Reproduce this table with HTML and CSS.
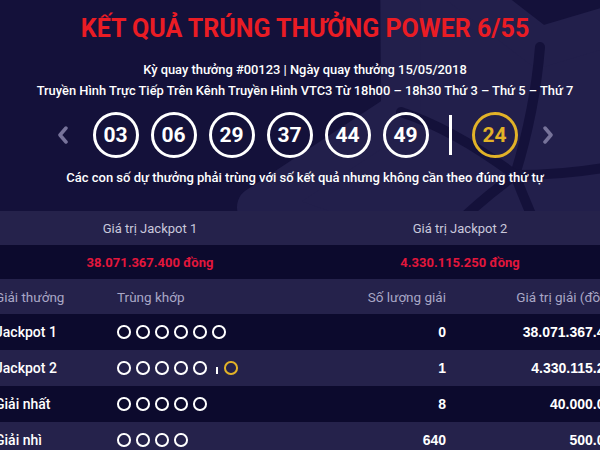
FILE: index.html
```html
<!DOCTYPE html>
<html lang="vi">
<head>
<meta charset="utf-8">
<title>Kết quả Power 6/55</title>
<link rel="stylesheet" href="styles.css">
</head>
<body>
<div class="page">
  <header class="hero">
    <svg class="hero-bg" viewBox="0 0 620 212" width="620" height="212" aria-hidden="true">
      <path class="star" d="M405 -61 L545 47 L710 -2 L649 159 L747 301 L575 293 L470 430 L425 264 L262 207 L406 112 Z"/>
      <path class="gap" d="M520 175 Q540 110 545 47"/>
      <path class="gap" d="M520 175 Q590 175 649 159"/>
      <path class="gap" d="M520 175 Q545 240 575 293"/>
      <path class="gap" d="M520 175 Q465 215 425 264"/>
      <path class="gap" d="M520 175 Q460 130 406 112"/>
    </svg>
    <div class="hero-content">
      <h1 class="title">KẾT QUẢ TRÚNG THƯỞNG POWER 6/55</h1>
      <p class="meta meta-first">Kỳ quay thưởng #00123 | Ngày quay thưởng 15/05/2018</p>
      <p class="meta">Truyền Hình Trực Tiếp Trên Kênh Truyền Hình VTC3 Từ 18h00 – 18h30 Thứ 3 – Thứ 5 – Thứ 7</p>
      <div class="balls">
        <svg class="chev" viewBox="0 0 12 18" width="12" height="18"><polyline points="9,2 3,9 9,16"/></svg>
        <span class="ball">03</span>
        <span class="ball">06</span>
        <span class="ball">29</span>
        <span class="ball">37</span>
        <span class="ball">44</span>
        <span class="ball">49</span>
        <span class="sep"></span>
        <span class="ball ball-gold">24</span>
        <svg class="chev" viewBox="0 0 12 18" width="12" height="18"><polyline points="3,2 9,9 3,16"/></svg>
      </div>
      <p class="note">Các con số dự thưởng phải trùng với số kết quả nhưng không cần theo đúng thứ tự</p>
    </div>
  </header>

  <section class="jackpots">
    <div class="jp-label">Giá trị Jackpot 1</div>
    <div class="jp-label">Giá trị Jackpot 2</div>
    <div class="jp-value">38.071.367.400 đồng</div>
    <div class="jp-value">4.330.115.250 đồng</div>
  </section>

  <section class="prizes">
    <div class="row row-head">
      <div class="c-name">Giải thưởng</div>
      <div class="c-match">Trùng khớp</div>
      <div class="c-count">Số lượng giải</div>
      <div class="c-value">Giá trị giải (đồng)</div>
    </div>
    <div class="row row-dark">
      <div class="c-name">Jackpot 1</div>
      <div class="c-match"><i class="dot"></i><i class="dot"></i><i class="dot"></i><i class="dot"></i><i class="dot"></i><i class="dot"></i></div>
      <div class="c-count num">0</div>
      <div class="c-value num">38.071.367.400</div>
    </div>
    <div class="row row-light">
      <div class="c-name">Jackpot 2</div>
      <div class="c-match"><i class="dot"></i><i class="dot"></i><i class="dot"></i><i class="dot"></i><i class="dot"></i><i class="bar"></i><i class="dot dot-gold"></i></div>
      <div class="c-count num">1</div>
      <div class="c-value num">4.330.115.250</div>
    </div>
    <div class="row row-dark">
      <div class="c-name">Giải nhất</div>
      <div class="c-match"><i class="dot"></i><i class="dot"></i><i class="dot"></i><i class="dot"></i><i class="dot"></i></div>
      <div class="c-count num">8</div>
      <div class="c-value num">40.000.000</div>
    </div>
    <div class="row row-light">
      <div class="c-name">Giải nhì</div>
      <div class="c-match"><i class="dot"></i><i class="dot"></i><i class="dot"></i><i class="dot"></i></div>
      <div class="c-count num">640</div>
      <div class="c-value num">500.000</div>
    </div>
  </section>
</div>
</body>
</html>
```

FILE: styles.css
```css
* { box-sizing: border-box; }

body {
  margin: 0;
  background: #14113a;
  font-family: Roboto, "Liberation Sans", sans-serif;
  overflow: hidden;
}

.page {
  width: 620px;
  margin-left: -5px;
}

/* ---------- hero ---------- */
.hero {
  position: relative;
  height: 211px;
  overflow: hidden;
  text-align: center;
  color: #fff;
}

.hero-bg {
  position: absolute;
  left: 0;
  top: 0;
}

.star {
  fill: #221f4b;
  stroke: #221f4b;
  stroke-width: 40;
  stroke-linejoin: round;
}

.gap {
  fill: none;
  stroke: #14113a;
  stroke-width: 10;
  stroke-linecap: round;
}

.hero-content {
  position: relative;
  padding-top: 15px;
}

.title {
  margin: 0;
  font-size: 25px;
  line-height: 28px;
  font-weight: 700;
  color: #ea1c24;
}

.meta {
  margin: 0;
  font-size: 12.9px;
  line-height: 21px;
  font-weight: 500;
}

.meta-first {
  margin-top: 16px;
}

.balls {
  display: flex;
  justify-content: center;
  align-items: center;
  gap: 12px;
  margin-top: 11px;
}

.chev {
  flex: none;
}

.chev:first-child { margin-right: 12px; }
.chev:last-child { margin-left: 12px; }

.chev polyline {
  fill: none;
  stroke: #77739a;
  stroke-width: 3.5;
  stroke-linecap: round;
  stroke-linejoin: round;
}

.ball {
  flex: none;
  width: 46px;
  height: 46px;
  border: 3.5px solid #fff;
  border-radius: 50%;
  display: flex;
  align-items: center;
  justify-content: center;
  font-size: 21px;
  font-weight: 700;
  color: #fff;
}

.ball-gold {
  border-color: #e2b228;
  color: #e2b228;
}

.sep {
  width: 3px;
  height: 40px;
  background: #fff;
  margin: 0 8px;
}

.note {
  margin: 10px 0 0;
  font-size: 13px;
  line-height: 20px;
  font-weight: 500;
}

/* ---------- jackpots ---------- */
.jackpots {
  display: grid;
  grid-template-columns: 1fr 1fr;
  grid-auto-rows: 34px;
  text-align: center;
  font-family: Roboto, sans-serif;
  font-size: 13px;
}

.jp-label {
  background: #25224b;
  color: #c9c8dc;
  display: flex;
  align-items: center;
  justify-content: center;
}

.jp-value {
  background: #0c0a2d;
  color: #e3173c;
  font-weight: 700;
  display: flex;
  align-items: center;
  justify-content: center;
}

/* ---------- prizes ---------- */
.prizes {
  font-family: Roboto, "Liberation Sans", sans-serif;
  font-size: 14px;
}

.row {
  display: grid;
  grid-template-columns: 122px 200px 129px 174px;
  align-items: center;
  height: 36px;
  width: 625px;
}

.row-head {
  height: 35px;
  background: #25224b;
  color: #a9a7c6;
  font-size: 13.5px;
}

.row-dark {
  background: #0c0a2d;
  color: #fff;
}

.row-light {
  background: #25224b;
  color: #fff;
}

.row-dark .c-name,
.row-light .c-name {
  font-weight: 500;
}

.c-count,
.c-value {
  text-align: right;
}

.num {
  font-family: "Liberation Sans", Arial, sans-serif;
  font-weight: 700;
  font-size: 14px;
}

.c-match {
  display: flex;
  align-items: center;
}

.dot {
  width: 13.5px;
  height: 13.5px;
  border: 2.6px solid #fff;
  border-radius: 50%;
  margin-right: 5.5px;
}

.dot-gold {
  border-color: #e2b228;
}

.bar {
  width: 2px;
  height: 7px;
  background: #fff;
  align-self: flex-end;
  margin: 0 6px 1px 4px;
}
```
